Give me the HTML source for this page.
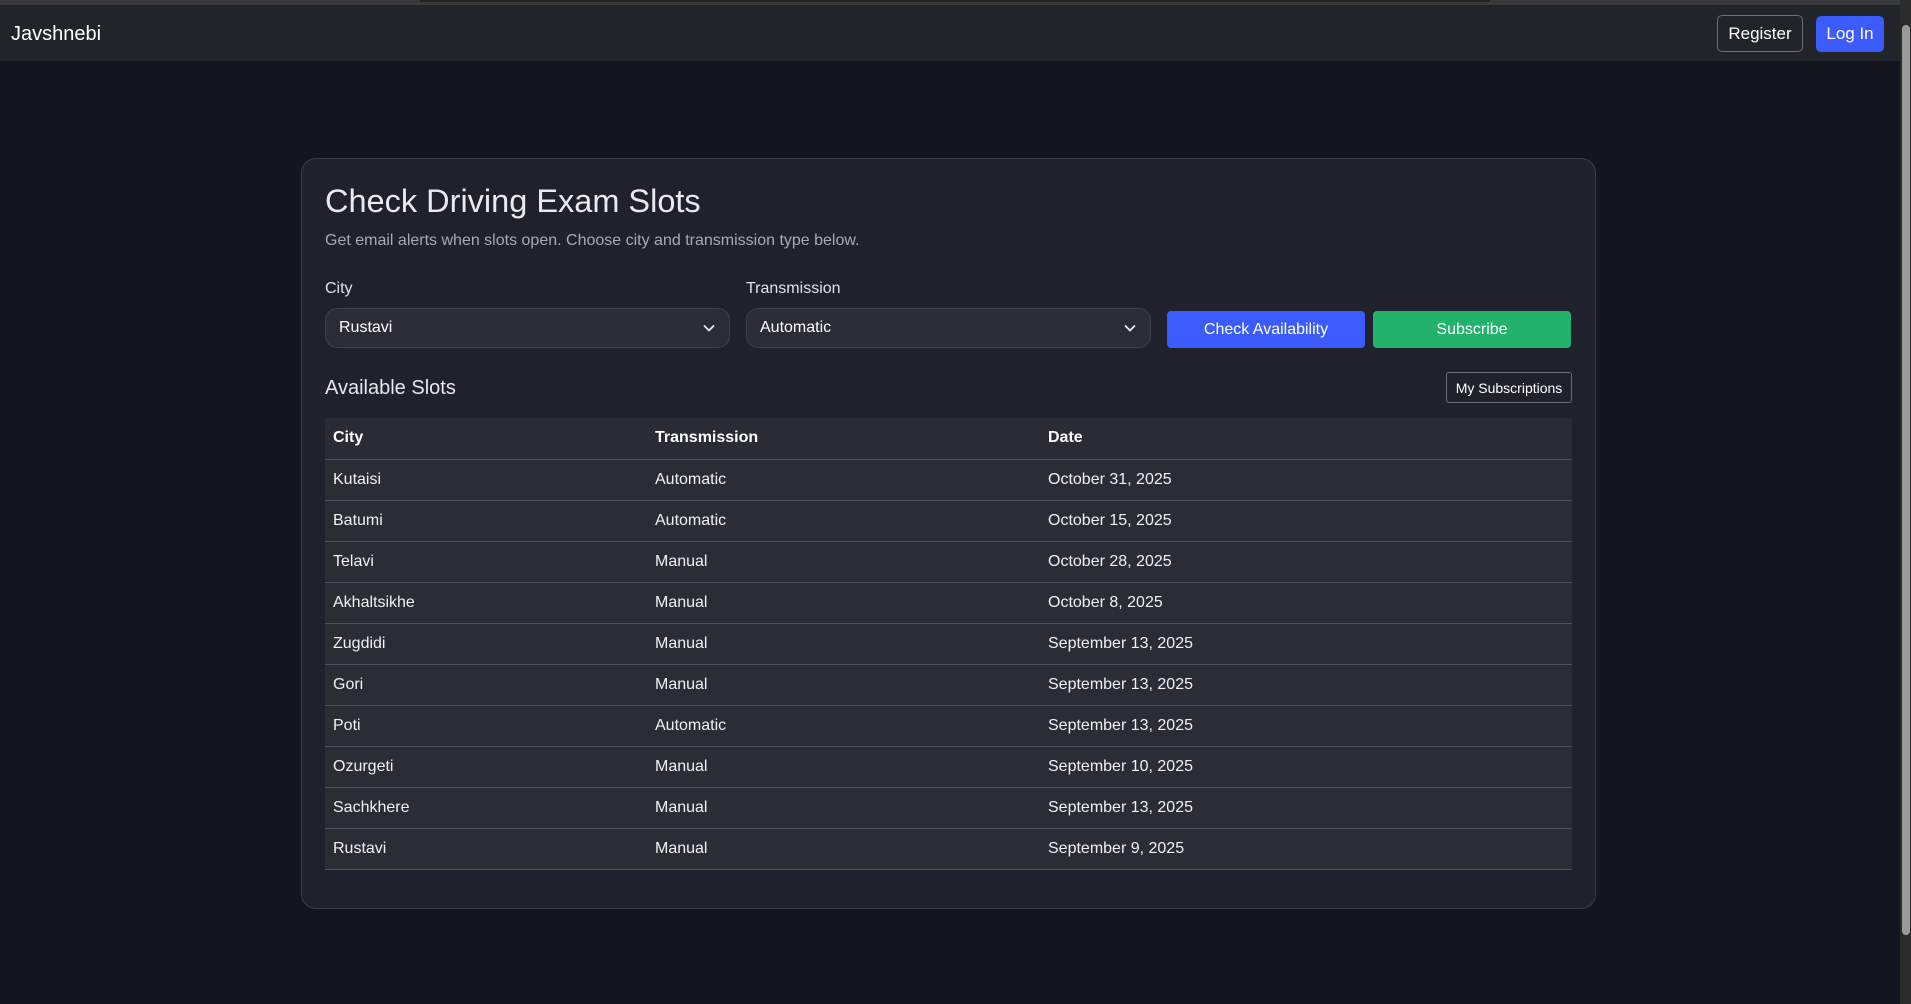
<!DOCTYPE html>
<html><head><meta charset="utf-8"><style>
*{box-sizing:border-box;margin:0;padding:0}
html,body{width:1911px;height:1004px;overflow:hidden;background:#13161f;font-family:"Liberation Sans",Arial,sans-serif;color:#e6e8ee}
.topstrip{position:absolute;left:0;top:0;width:1900px;height:5px;background:#3a3a3d}
.topstrip i{position:absolute;left:420px;width:1070px;top:0;height:2px;background:#222}
.nav{position:absolute;left:0;top:5px;width:1900px;height:56px;background:#212429}
.brand{position:absolute;left:11px;top:18px;font-size:20px;color:#fff}
.btn-reg{position:absolute;left:1717px;top:10px;width:86px;height:37px;border:1px solid #6c6f76;border-radius:5px;color:#fff;font-size:17px;display:flex;align-items:center;justify-content:center}
.btn-log{position:absolute;left:1816px;top:11px;width:68px;height:36px;background:#3b5bfd;border-radius:5px;color:#fff;font-size:17px;display:flex;align-items:center;justify-content:center}
.sb{position:absolute;left:1900px;top:0;width:11px;height:1004px;background:#2b2b2b}
.sb i{position:absolute;left:2px;top:25px;width:8px;height:910px;background:#9a9a9a;border-radius:4px}
.card{position:absolute;left:301px;top:158px;width:1295px;height:751px;background:#1f212d;border:1px solid #3c3f4a;border-radius:15px}
.abs{position:absolute}
h1{position:absolute;left:23px;top:24px;font-size:32.5px;font-weight:400;color:#e8eaf0}
.sub{left:23px;top:73px;font-size:16px;color:#a7abb5}
.lbl{top:121px;font-size:16px;color:#dfe2e8}
.sel{top:149px;width:405px;height:40px;background:#2a2c38;border:1px solid #3e414c;border-radius:12px;font-size:16px;color:#fff;padding:10px 0 0 13px}
.sel svg{position:absolute;right:14px;top:15px}
.b{top:152px;width:198px;height:37px;border-radius:4px;color:#fff;font-size:16px;display:flex;align-items:center;justify-content:center}
.h2{left:23px;top:218px;font-size:20px;color:#e6e8ee}
.mys{left:1144px;top:213px;width:126px;height:31px;border:1px solid #6a6d75;border-radius:3px;font-size:14px;color:#fff;display:flex;align-items:center;justify-content:center}
table{position:absolute;left:23px;top:259px;width:1247px;border-collapse:collapse;font-size:16px}
th{background:#292b35;height:41px;text-align:left;font-weight:700;color:#fff;padding-left:8px;border-bottom:1px solid #4d5058}
td{background:#2b2d35;height:41px;padding-left:8px;color:#f0f1f4;border-bottom:1px solid #4d5058}
</style></head><body>
<div class="topstrip"><i></i></div>
<div class="nav"><div class="brand">Javshnebi</div><div class="btn-reg">Register</div><div class="btn-log">Log In</div></div>
<div class="sb"><i></i></div>
<div class="card">
<h1>Check Driving Exam Slots</h1>
<div class="abs sub">Get email alerts when slots open. Choose city and transmission type below.</div>
<div class="abs lbl" style="left:23px">City</div>
<div class="abs lbl" style="left:444px">Transmission</div>
<div class="abs sel" style="left:23px">Rustavi<svg width="12" height="8" viewBox="0 0 12 8"><path d="M1 1.5l5 5 5-5" stroke="#e6e8ee" stroke-width="1.8" fill="none"/></svg></div>
<div class="abs sel" style="left:444px">Automatic<svg width="12" height="8" viewBox="0 0 12 8"><path d="M1 1.5l5 5 5-5" stroke="#e6e8ee" stroke-width="1.8" fill="none"/></svg></div>
<div class="abs b" style="left:865px;background:#3b5bfd">Check Availability</div>
<div class="abs b" style="left:1071px;background:#22b26b">Subscribe</div>
<div class="abs h2">Available Slots</div>
<div class="abs mys">My Subscriptions</div>
<table>
<tr><th style="width:322px">City</th><th style="width:393px">Transmission</th><th>Date</th></tr>
<tr><td>Kutaisi</td><td>Automatic</td><td>October 31, 2025</td></tr>
<tr><td>Batumi</td><td>Automatic</td><td>October 15, 2025</td></tr>
<tr><td>Telavi</td><td>Manual</td><td>October 28, 2025</td></tr>
<tr><td>Akhaltsikhe</td><td>Manual</td><td>October 8, 2025</td></tr>
<tr><td>Zugdidi</td><td>Manual</td><td>September 13, 2025</td></tr>
<tr><td>Gori</td><td>Manual</td><td>September 13, 2025</td></tr>
<tr><td>Poti</td><td>Automatic</td><td>September 13, 2025</td></tr>
<tr><td>Ozurgeti</td><td>Manual</td><td>September 10, 2025</td></tr>
<tr><td>Sachkhere</td><td>Manual</td><td>September 13, 2025</td></tr>
<tr><td>Rustavi</td><td>Manual</td><td>September 9, 2025</td></tr>
</table>
</div>
</body></html>
